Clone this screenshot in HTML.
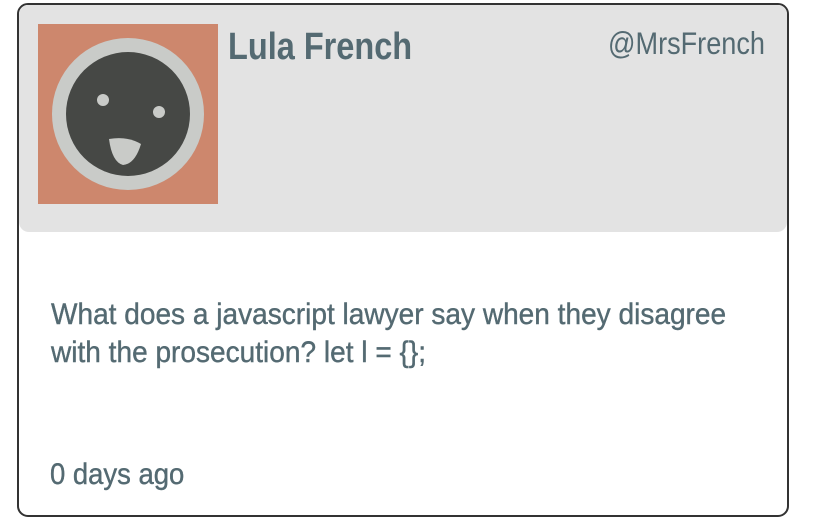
<!DOCTYPE html>
<html><head><style>
body{margin:0;width:816px;height:530px;background:#fff;font-family:"Liberation Sans",sans-serif;color:#546a72;position:relative;overflow:hidden}
.card{position:absolute;left:17px;top:3px;width:768px;height:510px;border:2px solid #333;border-radius:11px;overflow:hidden}
.hdr{position:absolute;left:0;top:0;width:768px;height:227px;background:#e3e3e3;border-radius:0 0 10px 10px}
.t{position:absolute;white-space:nowrap;transform-origin:0 0}
</style></head><body>
<div class="card"><div class="hdr"></div></div>
<svg style="position:absolute;left:38px;top:24px" width="180" height="180" viewBox="0 0 180 180">
<rect width="180" height="180" fill="#cd876d"/>
<circle cx="90" cy="90" r="76" fill="#c9cbc8"/>
<circle cx="90" cy="90" r="62" fill="#464845"/>
<circle cx="65" cy="76" r="6" fill="#c9cbc8"/>
<circle cx="121" cy="88" r="6" fill="#c9cbc8"/>
<path d="M71 115 Q90 112 103 120 Q97 140 85 141 Q74 138 71 115Z" fill="#c9cbc8"/>
</svg>
<div class="t" style="left:228px;top:26px;font-size:38px;font-weight:bold;transform:scaleX(.855)">Lula French</div>
<div class="t" style="left:608px;top:25px;font-size:31.5px;transform:scaleX(.86)">@MrsFrench</div>
<div class="t" style="left:51px;top:296px;font-size:30px;line-height:38px;transform:scaleX(.935);-webkit-text-stroke:0.4px #546a72">What does a javascript lawyer say when they disagree<br>with the prosecution? let l = {};</div>
<div class="t" style="left:50px;top:456px;font-size:30px;line-height:38px;transform:scaleX(.915);-webkit-text-stroke:0.4px #546a72">0 days ago</div>
</body></html>
